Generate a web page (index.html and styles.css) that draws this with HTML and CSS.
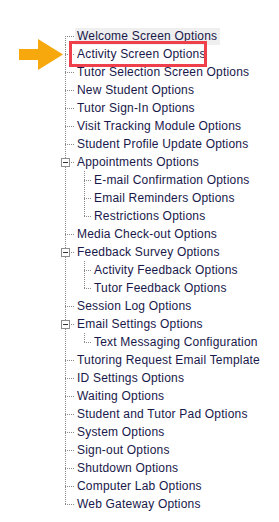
FILE: index.html
```html
<!DOCTYPE html>
<html>
<head>
<meta charset="utf-8">
<link rel="stylesheet" href="styles.css">
</head>
<body>
<div class="page">
  <ul class="tree">
    <li><div class="row"><span class="tw"></span><span class="label sel">Welcome Screen Options</span></div></li>
    <li class="marked"><div class="row"><span class="tw"></span><span class="label">Activity Screen Options</span>
      <span class="redbox"></span>
      <svg class="arrow" width="45" height="32" viewBox="0 0 45 32"><polygon points="0,10 19,10 19,0 44,15.5 19,31 19,21 0,21" fill="#f6a80c"/></svg>
    </div></li>
    <li><div class="row"><span class="tw"></span><span class="label">Tutor Selection Screen Options</span></div></li>
    <li><div class="row"><span class="tw"></span><span class="label">New Student Options</span></div></li>
    <li><div class="row"><span class="tw"></span><span class="label">Tutor Sign-In Options</span></div></li>
    <li><div class="row"><span class="tw"></span><span class="label">Visit Tracking Module Options</span></div></li>
    <li><div class="row"><span class="tw"></span><span class="label">Student Profile Update Options</span></div></li>
    <li><div class="row"><span class="tw box"></span><span class="label">Appointments Options</span></div>
      <ul class="sub">
        <li><div class="row"><span class="label">E-mail Confirmation Options</span></div></li>
        <li><div class="row"><span class="label">Email Reminders Options</span></div></li>
        <li><div class="row"><span class="label">Restrictions Options</span></div></li>
      </ul>
    </li>
    <li><div class="row"><span class="tw"></span><span class="label">Media Check-out Options</span></div></li>
    <li><div class="row"><span class="tw box"></span><span class="label">Feedback Survey Options</span></div>
      <ul class="sub">
        <li><div class="row"><span class="label">Activity Feedback Options</span></div></li>
        <li><div class="row"><span class="label">Tutor Feedback Options</span></div></li>
      </ul>
    </li>
    <li><div class="row"><span class="tw"></span><span class="label">Session Log Options</span></div></li>
    <li><div class="row"><span class="tw box"></span><span class="label">Email Settings Options</span></div>
      <ul class="sub">
        <li><div class="row"><span class="label">Text Messaging Configuration</span></div></li>
      </ul>
    </li>
    <li><div class="row"><span class="tw"></span><span class="label">Tutoring Request Email Template</span></div></li>
    <li><div class="row"><span class="tw"></span><span class="label">ID Settings Options</span></div></li>
    <li><div class="row"><span class="tw"></span><span class="label">Waiting Options</span></div></li>
    <li><div class="row"><span class="tw"></span><span class="label">Student and Tutor Pad Options</span></div></li>
    <li><div class="row"><span class="tw"></span><span class="label">System Options</span></div></li>
    <li><div class="row"><span class="tw"></span><span class="label">Sign-out Options</span></div></li>
    <li><div class="row"><span class="tw"></span><span class="label">Shutdown Options</span></div></li>
    <li><div class="row"><span class="tw"></span><span class="label">Computer Lab Options</span></div></li>
    <li><div class="row"><span class="tw"></span><span class="label">Web Gateway Options</span></div></li>
  </ul>
</div>
</body>
</html>
```
FILE: styles.css
```css
html, body {
  margin: 0;
  padding: 0;
  background: #ffffff;
}
body {
  font-family: "Liberation Sans", Arial, sans-serif;
  font-size: 12px;
  letter-spacing: 0.2px;
  color: #18184a;
}
.page {
  padding-top: 27px;
}
ul {
  list-style: none;
  margin: 0;
  padding: 0;
}
.tree {
  margin-left: 65px;
}
.tree li {
  background-image:
    repeating-linear-gradient(to bottom, #8a8a8a 0 1px, transparent 1px 2px),
    repeating-linear-gradient(to right, #8a8a8a 0 1px, transparent 1px 2px);
  background-size: 1px 100%, 9px 1px;
  background-position: 0 0, 0 9px;
  background-repeat: no-repeat;
}
.tree > li:first-child {
  background-size: 1px 100%, 9px 1px;
  background-position: 0 9px, 0 9px;
}
.tree li:last-child {
  background-size: 1px 10px, 9px 1px;
}
.row {
  position: relative;
  display: flex;
  align-items: center;
  height: 18px;
  white-space: nowrap;
}
.tree > li > .row {
  margin-left: -4px;
}
.tw {
  flex: none;
  width: 9px;
  height: 9px;
  margin-right: 7px;
  box-sizing: border-box;
}
.tw.box {
  border: 1px solid #8e8e8e;
  background: #ffffff linear-gradient(#333 0 0) center / 5px 1px no-repeat;
}
.label {
  line-height: 18px;
}
.sel {
  background: #efefef;
  line-height: 17px;
  margin-left: -2px;
  padding: 0 3px 0 2px;
}
.sub {
  margin-left: 19px;
}
.sub li {
  padding-left: 10px;
  background-size: 1px 100%, 8px 1px;
}
.sub li:first-child {
  background-size: 1px 100%, 8px 1px;
}
.sub li:last-child {
  background-size: 1px 10px, 8px 1px;
}
.redbox {
  position: absolute;
  left: 8px;
  top: -4px;
  width: 138px;
  height: 26px;
  box-sizing: border-box;
  border: 3px solid #ef3f4a;
}
.arrow {
  position: absolute;
  left: -42px;
  top: -6px;
}
```
